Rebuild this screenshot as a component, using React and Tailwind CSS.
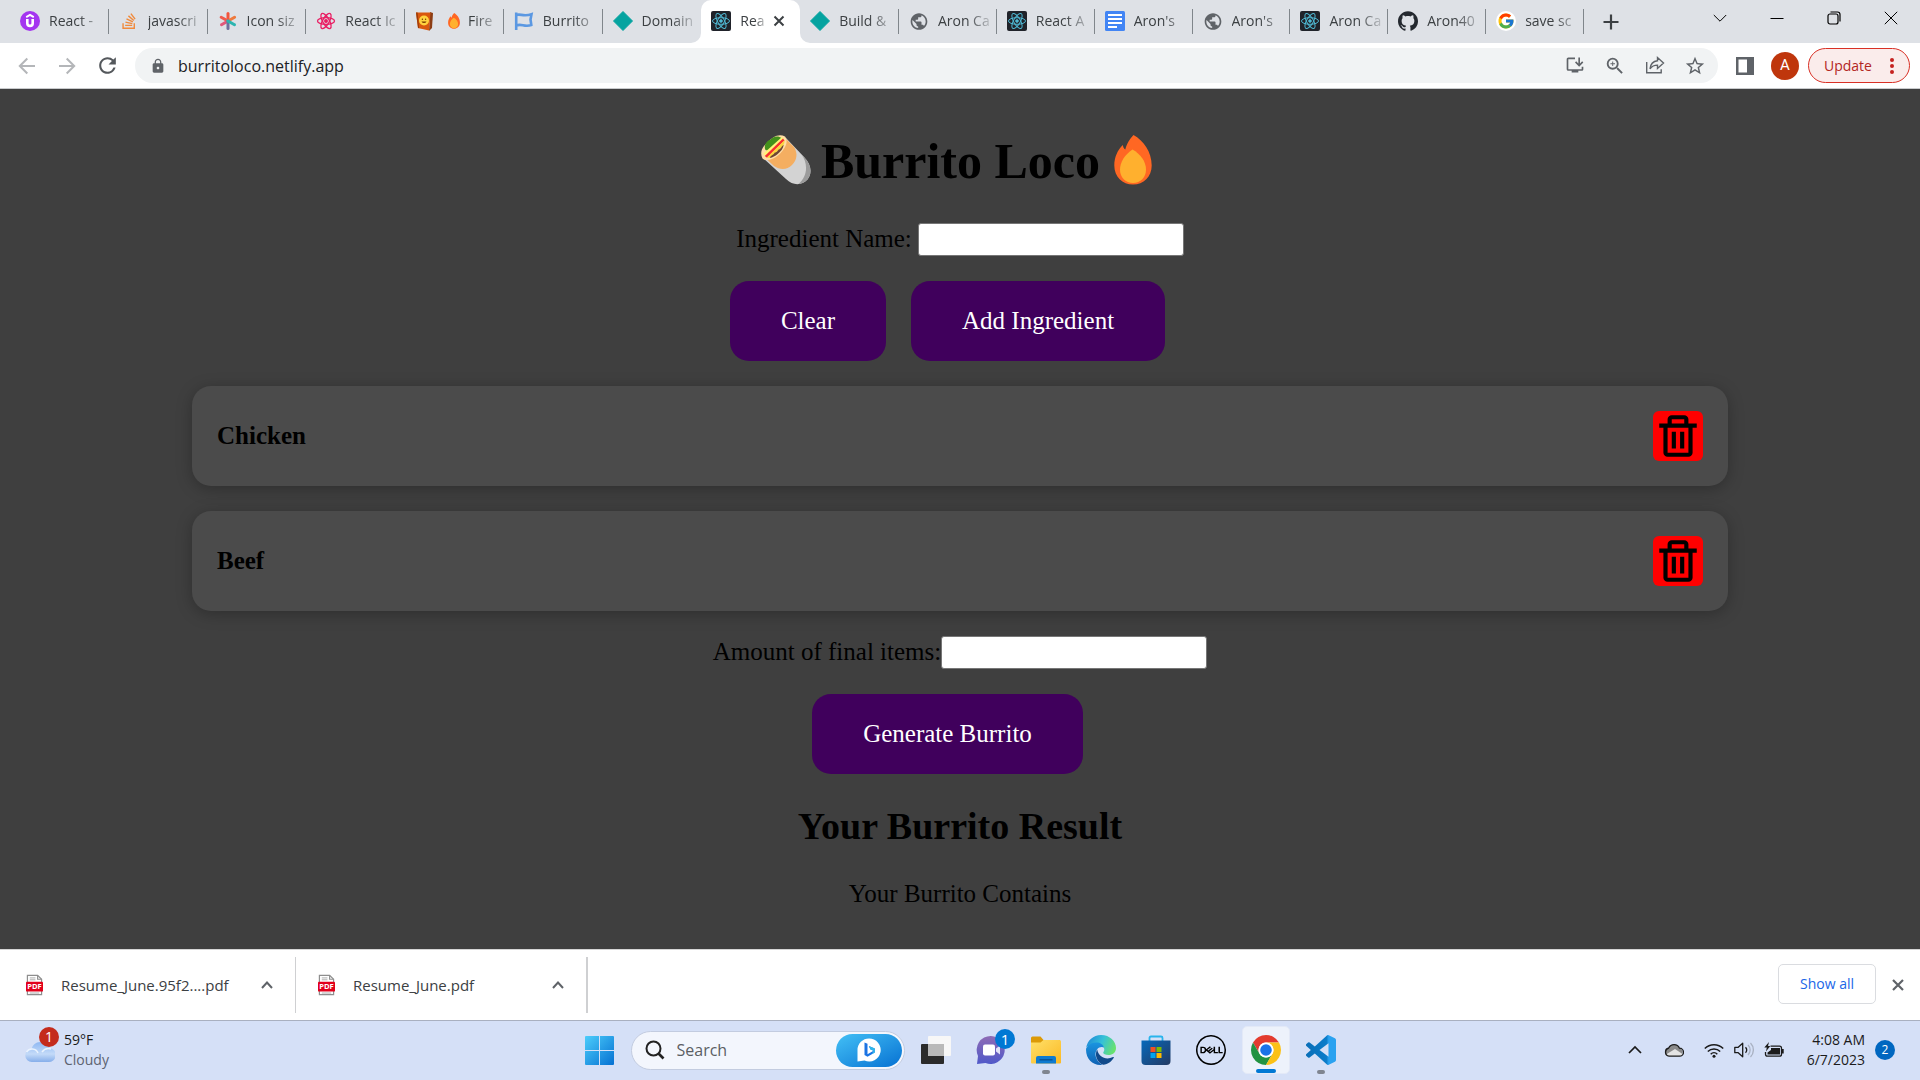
import React from "react";
import { FaStackOverflow } from "react-icons/fa";
import { FcGoogle } from "react-icons/fc";
import { SiDell, SiGithub } from "react-icons/si";
import { MdInstallDesktop, MdLock, MdPublic, MdRefresh, MdStarBorder, MdZoomIn } from "react-icons/md";
import { BiTrash } from "react-icons/bi";

/* ---------- tab icons ---------- */

const UdemyIcon = () => (
  <svg viewBox="0 0 20 20" className="size-5">
    <circle cx="10" cy="10" r="10" fill="#a435f0" />
    <path d="M6.2 6.1 10 3.9l3.8 2.2" fill="none" stroke="#fff" strokeWidth="1.8" />
    <path d="M7.3 8v4.2a2.7 2.7 0 0 0 5.4 0V8" fill="none" stroke="#fff" strokeWidth="2.6" />
  </svg>
);

const AsteriskIcon = () => (
  <svg viewBox="0 0 20 20" className="size-5" fill="none" strokeWidth="3" strokeLinecap="round">
    <path d="M10 10V2.5" stroke="#f2553c" />
    <path d="M10 10 3.2 6.2" stroke="#ef5a4c" />
    <path d="m10 10 6.600-3.700" stroke="#ee7a3e" />
    <path d="m10 10-6.500 3.800" stroke="#e0577a" />
    <path d="M10 10v7.500" stroke="#6f6f9d" />
    <path d="m10 10 6.500 3.800" stroke="#2cb5b0" />
  </svg>
);

const Atom = ({ color, width = 1 }) => (
  <g fill="none" stroke={color} strokeWidth={width}>
    <ellipse cx="10" cy="10" rx="8.500" ry="3.300" />
    <ellipse cx="10" cy="10" rx="8.500" ry="3.300" transform="rotate(60 10 10)" />
    <ellipse cx="10" cy="10" rx="8.500" ry="3.300" transform="rotate(120 10 10)" />
    <circle cx="10" cy="10" r="1.300" fill={color} />
  </g>
);

const ReactPinkIcon = () => (
  <svg viewBox="0 0 20 20" className="size-5">
    <Atom color="#e91e63" width={1.3} />
  </svg>
);

const ReactDarkIcon = () => (
  <svg viewBox="0 0 20 20" className="size-5">
    <rect width="20" height="20" rx="2" fill="#20232a" />
    <Atom color="#4fb8d3" />
  </svg>
);

const EmojiBookIcon = () => (
  <svg viewBox="0 0 20 20" className="size-5">
    <path d="m15 1 3 1-1 15-3 3z" fill="#8c3d14" />
    <path d="M1 1.500 15.500 1.500 14 19.500 3 17z" fill="#d9580f" />
    <path d="M1 1.500 3 17l1.200.3L2.600 1.500z" fill="#9c3c08" />
    <circle cx="9" cy="9.500" r="5" fill="#ffd23f" />
    <circle cx="7.400" cy="8.200" r=".7" fill="#7a3a00" />
    <circle cx="10.600" cy="8.200" r=".7" fill="#7a3a00" />
    <path d="M6.500 10.500a2.800 2.800 0 0 0 5 0z" fill="#7a3a00" />
  </svg>
);

const FlagIcon = () => (
  <svg viewBox="0 0 20 20" className="size-5" fill="none" stroke="#5b98e2" strokeWidth="2.600">
    <path d="M2.200 1.500v17.500M2.200 4.200C6 2 9 6.200 17.500 3.200l-1 5.300.8 5.500c-7 2.500-10-2-15.100.6" />
  </svg>
);

const DiamondIcon = () => (
  <svg viewBox="0 0 20 20" className="size-5">
    <path d="M10 .5 19.500 10 10 19.500.5 10z" fill="#05a3a0" stroke="#05a3a0" strokeLinejoin="round" />
  </svg>
);

const DocsIcon = () => (
  <svg viewBox="0 0 20 20" className="size-5">
    <rect width="20" height="20" rx="1.500" fill="#4285f4" />
    <path d="M3 4h14M3 8h14M3 12h14M3 16h9" stroke="#fff" strokeWidth="2" />
  </svg>
);

const FlameShape = ({ className }) => (
  <svg viewBox="0 0 38 50" className={className}>
    <path
      d="M19.500 0C16 3.500 12.500 9 11.300 14.500 9.800 13.500 9.200 12 8.800 10 3.500 15 .3 22.500.3 30.500.3 42 8.500 49.500 19 49.500S37.700 42 37.700 30.500C37.700 17 29.500 5.500 19.500 0z"
      fill="#ff6723"
    />
    <path
      d="M18.500 14.500C11 19.500 6 27 6 34.500 6 42.500 11.500 48 19 48s13-5.500 13-13.500c0-8-5.500-15.500-13.500-20z"
      fill="#ffb02e"
    />
  </svg>
);

const GoogleIcon = () => (
  <span className="flex size-5 items-center justify-center rounded-full bg-white">
    <FcGoogle size={18} />
  </span>
);

const TABS = [
  { title: "React -", icon: <UdemyIcon /> },
  { title: "javascri", icon: <FaStackOverflow size={18} color="#f08a3c" /> },
  { title: "Icon siz", icon: <AsteriskIcon /> },
  { title: "React Ic", icon: <ReactPinkIcon /> },
  { title: "Fire", icon: <EmojiBookIcon />, flame: true },
  { title: "Burrito", icon: <FlagIcon /> },
  { title: "Domain", icon: <DiamondIcon /> },
  { title: "Rea", icon: <ReactDarkIcon />, active: true },
  { title: "Build &", icon: <DiamondIcon /> },
  { title: "Aron Ca", icon: <MdPublic size={21} color="#5f6368" />, narrow: true },
  { title: "React A", icon: <ReactDarkIcon />, narrow: true },
  { title: "Aron's", icon: <DocsIcon />, narrow: true },
  { title: "Aron's", icon: <MdPublic size={21} color="#5f6368" />, narrow: true },
  { title: "Aron Ca", icon: <ReactDarkIcon />, narrow: true },
  { title: "Aron40", icon: <SiGithub size={20} color="#24292f" />, narrow: true },
  { title: "save sc", icon: <GoogleIcon />, narrow: true },
];

function Tab({ tab, separator }) {
  const base =
    "relative flex h-[43px] min-w-0 items-center pb-px pl-[10px] " + (tab.narrow ? "flex-[98]" : "flex-[99]");
  return (
    <div className={tab.active ? base + " rounded-t-[10px] bg-white" : base}>
      {tab.active && (
        <>
          <svg viewBox="0 0 10 10" className="absolute bottom-0 -left-[10px] size-[10px]">
            <path d="M10 0v10H0A10 10 0 0 0 10 0z" fill="#fff" />
          </svg>
          <svg viewBox="0 0 10 10" className="absolute -right-[10px] bottom-0 size-[10px]">
            <path d="M0 0v10h10A10 10 0 0 1 0 0z" fill="#fff" />
          </svg>
        </>
      )}
      <button type="button" className="flex min-w-0 flex-1 items-center gap-[9px]">
        <span className="flex w-5 shrink-0 justify-center">{tab.icon}</span>
        <span className="flex min-w-0 flex-1 items-center gap-2 text-[14px] leading-5 whitespace-nowrap text-[#3c4043] [mask-image:linear-gradient(to_right,black_50%,transparent)]">
          {tab.flame && <FlameShape className="ml-1 h-4 w-3 shrink-0" />}
          {tab.title}
        </span>
      </button>
      {tab.active && (
        <button type="button" aria-label="Close tab" className="mr-[14px] ml-1 shrink-0">
          <svg viewBox="0 0 12 12" className="size-3" stroke="#3c4043" strokeWidth="2">
            <path d="m1.500 1.500 9 9m0-9-9 9" />
          </svg>
        </button>
      )}
      <span className={separator ? "h-[25px] w-px shrink-0 bg-[#80868b]" : "w-px shrink-0"} />
    </div>
  );
}

function TabStrip() {
  return (
    <div className="flex h-[43px] items-center bg-[#dee1e6] pl-[10px]">
      <div className="flex min-w-0 flex-[0_1_1574px]">
        {TABS.map((tab, i) => (
          <Tab key={i} tab={tab} separator={!tab.active && !TABS[i + 1]?.active} />
        ))}
      </div>
      <button type="button" aria-label="New tab" className="ml-[19px] shrink-0">
        <svg viewBox="0 0 16 16" className="size-4" stroke="#3c4043" strokeWidth="2.200">
          <path d="M8 .5v15M.5 8h15" />
        </svg>
      </button>
      <div className="mr-px mb-[7px] ml-auto flex shrink-0 text-black">
        <button type="button" aria-label="Search tabs" className="flex w-[57px] justify-center">
          <svg viewBox="0 0 14 14" className="size-[14px]" fill="none" stroke="currentColor">
            <path d="m.8 4 6.200 6.200L13.200 4" />
          </svg>
        </button>
        <button type="button" aria-label="Minimize" className="flex w-[57px] justify-center">
          <svg viewBox="0 0 14 14" className="size-[14px]" stroke="currentColor">
            <path d="M.5 7.500h13" />
          </svg>
        </button>
        <button type="button" aria-label="Restore" className="flex w-[57px] justify-center">
          <svg viewBox="0 0 14 14" className="size-[14px]" fill="none" stroke="currentColor" strokeWidth="1.200">
            <rect x="1" y="3" width="10" height="10" rx="2" />
            <path d="M3.500 1H10.500Q13 1 13 3.500V10.500" />
          </svg>
        </button>
        <button type="button" aria-label="Close" className="flex w-[57px] justify-center">
          <svg viewBox="0 0 14 14" className="size-[14px]" stroke="currentColor">
            <path d="m.8.800 12.400 12.400m0-12.400L.8 13.200" />
          </svg>
        </button>
      </div>
    </div>
  );
}

function Toolbar() {
  return (
    <div className="flex h-[46px] items-center border-b border-[#c9cbcd] bg-white pr-[10px] pl-[7px]">
      <button type="button" aria-label="Back" className="flex w-10 justify-center">
        <svg viewBox="0 0 18 18" className="size-[18px]" fill="none" stroke="#b4b6b9" strokeWidth="2">
          <path d="M17 9H2M9.300 1.500 1.800 9l7.500 7.500" />
        </svg>
      </button>
      <button type="button" aria-label="Forward" className="flex w-10 justify-center">
        <svg viewBox="0 0 18 18" className="size-[18px]" fill="none" stroke="#b4b6b9" strokeWidth="2">
          <path d="M1 9h15M8.700 1.500 16.200 9l-7.500 7.500" />
        </svg>
      </button>
      <button type="button" aria-label="Reload" className="mr-[8px] flex w-10 justify-center">
        <MdRefresh size={25} color="#54585c" />
      </button>
      <div className="flex h-[35px] min-w-0 flex-1 items-center rounded-full bg-[#f1f3f4] pl-[15px]">
        <MdLock size={16} color="#5f6368" className="shrink-0" />
        <input
          type="text"
          aria-label="Address"
          defaultValue="burritoloco.netlify.app"
          className="ml-3 min-w-0 flex-1 bg-transparent text-[16px] text-[#202124] outline-none"
        />
        <div className="mr-[3px] flex text-[#5f6368]">
          <button type="button" aria-label="Install app" className="flex w-10 justify-center">
            <MdInstallDesktop size={20} />
          </button>
          <button type="button" aria-label="Zoom" className="flex w-10 justify-center">
            <MdZoomIn size={22} />
          </button>
          <button type="button" aria-label="Share" className="flex w-10 justify-center">
            <svg viewBox="0 0 20 20" className="size-5" fill="none" stroke="currentColor" strokeWidth="1.400">
              <path d="M1.700 7v10.800h14.500v-3.500" />
              <path d="M12.500 2.500v3.300C8 6.300 5.500 9.500 5 13.800c2-2.800 4.300-3.700 7.500-3.700v3.400L18.500 8z" />
            </svg>
          </button>
          <button type="button" aria-label="Bookmark" className="flex w-10 justify-center">
            <MdStarBorder size={22} />
          </button>
        </div>
      </div>
      <button type="button" aria-label="Side panel" className="ml-[18px]">
        <svg viewBox="0 0 18 18" className="size-[18px]">
          <path d="M0 0h18v18H0zM2.500 2.500v13h8.500v-13z" fill="#5f6368" fillRule="evenodd" />
        </svg>
      </button>
      <button
        type="button"
        aria-label="Profile"
        className="ml-[17px] flex size-7 items-center justify-center rounded-full bg-[#bf360c] font-['Roboto',sans-serif] text-[15px] text-white"
      >
        A
      </button>
      <button
        type="button"
        className="ml-[9px] flex h-[35px] w-[102px] items-center justify-between rounded-full border border-[#d93025] bg-[#faeceb] pr-[15px] pl-[15px] text-[14px] text-[#b3261e]"
      >
        Update
        <svg viewBox="0 0 4 16" className="h-4 w-1" fill="#c5221f">
          <circle cx="2" cy="2" r="2" />
          <circle cx="2" cy="8" r="2" />
          <circle cx="2" cy="14" r="2" />
        </svg>
      </button>
    </div>
  );
}

/* ---------- page ---------- */

const BurritoEmoji = () => (
  <svg viewBox="0 0 50 50" className="size-[50px]">
    <path d="M2 23 25 3l18 19c8 8 8 17 3.500 22.500C41 50.500 32 51 25 44z" fill="#d3d3d3" />
    <path d="m43 22-2.500-2.500C47 28 47 41 37.500 49c3.500-.5 6.500-2 9-4.500C51 39 51 30 43 22z" fill="#9b9b9b" />
    <path d="M1 20 22 1l11 11c4 6 3 13-2 18s-12 5-18 1z" fill="#f4ae61" />
    <path d="M1.500 23.500C-1.500 18 1 12 6 8c5-6 12-10 18-6.500 4 5 0 13-6.500 18.500-6 5-12.500 6.500-16 3.500z" fill="#ffdea7" />
    <path d="M4.500 15C2.500 11 5 6 9.500 4.500 13 .5 18 .8 20.500 3L8 16z" fill="#44911b" />
    <path d="M2.500 18.500 21 2l2 2L5 22z" fill="#fff478" />
    <path d="M3.800 21 22 3.600l1.500 1.800L6 22.800z" fill="#f92f2f" />
    <path d="M5.800 22.600 23.500 5.200c.4 2-.5 4-2 6.200L9 23z" fill="#fcd53f" />
    <path d="M9 23c.5-3 3.500-2.500 4.500-5.200 2.500-.3 3-2.300 4.200-3.300 2.300-.5 2.300-3 5-4.500-.5 3.500-3 6.500-6 9-2.500 2-5 3.600-7.700 4z" fill="#6d4534" />
  </svg>
);

const purpleButton =
  "mr-[25px] rounded-[19px] bg-[#40005c] px-[51px] py-[25px] text-[25px] leading-[30px] text-white";
const field = "h-[33px] w-[266px] rounded-[3px] border border-[#767676] bg-white px-1 text-[20px]";

function Ingredient({ name }) {
  return (
    <li className="flex items-center justify-between rounded-[19px] bg-[#4b4b4b] p-[25px] shadow-[0_3px_16px_rgba(0,0,0,0.26)]">
      <h3 className="text-[25px] leading-[30px] font-bold">{name}</h3>
      <button type="button" aria-label={"Delete " + name} className="rounded-[6px] bg-[#ff0000]">
        <BiTrash size={50} />
      </button>
    </li>
  );
}

function BurritoPage() {
  return (
    <main className="flex flex-1 flex-col items-center bg-[#3f3f3f] pt-[44px] pb-[40px] font-['Liberation_Serif',serif] text-[25px] leading-[29px] text-black">
      <h1 className="flex items-center text-[50px] leading-[57px] font-bold">
        <span className="-mt-1 mr-[10px]">
          <BurritoEmoji />
        </span>
        Burrito Loco
        <span className="-mt-1 mr-[7px] ml-[14px]">
          <FlameShape className="h-[50px] w-[38px]" />
        </span>
      </h1>
      <div className="mt-[33px] flex items-center">
        <label htmlFor="ingredient" className="mr-[6px] pb-[2px]">
          Ingredient Name:
        </label>
        <input id="ingredient" type="text" className={field} />
      </div>
      <div className="mt-[25px] flex">
        <button type="button" className={purpleButton}>
          Clear
        </button>
        <button type="button" className={purpleButton}>
          Add Ingredient
        </button>
      </div>
      <ul className="mt-[25px] flex w-4/5 flex-col gap-[25px]">
        <Ingredient name="Chicken" />
        <Ingredient name="Beef" />
      </ul>
      <div className="mt-[25px] flex items-center">
        <label htmlFor="amount" className="pb-[2px]">
          Amount of final items:
        </label>
        <input id="amount" type="text" className={field} />
      </div>
      <button type="button" className={purpleButton + " mt-[25px]"}>
        Generate Burrito
      </button>
      <h2 className="mt-[30px] text-[38px] leading-[44px] font-bold">Your Burrito Result</h2>
      <p className="mt-[31px]">Your Burrito Contains</p>
    </main>
  );
}

/* ---------- downloads ---------- */

const PdfIcon = () => (
  <svg viewBox="0 0 18 22" className="h-[22px] w-[17px]">
    <path d="M1.500.7h10.800l4.200 4.200v16.400h-15z" fill="#fff" stroke="#8e8e8e" strokeWidth="1.300" />
    <path d="M12.300.7v4.200h4.200" fill="none" stroke="#8e8e8e" strokeWidth="1.200" />
    <path d="M4 3.500h6M4 5.500h6M4 19.500h10" stroke="#a9a9a9" />
    <rect y="7.500" width="18" height="10.500" rx="1" fill="#e2001a" />
    <text x="9" y="15.700" textAnchor="middle" fontSize="8" fontWeight="700" fontFamily="Open Sans, sans-serif" fill="#fff">
      PDF
    </text>
  </svg>
);

function Download({ name, last }) {
  return (
    <div
      className={
        last
          ? "flex h-14 w-[292px] items-center border-r-2 border-[#cfd0d2] pl-[22px]"
          : "flex h-14 w-[296px] items-center border-r border-[#cfd0d2] pl-[26px]"
      }
    >
      <button type="button" className="flex flex-1 items-center gap-[18px] text-[15px] text-[#3c4043]">
        <PdfIcon />
        {name}
      </button>
      <button type="button" aria-label={"Options for " + name} className="mr-[22px]">
        <svg viewBox="0 0 12 12" className="size-3" fill="none" stroke="#5f6368" strokeWidth="2">
          <path d="m1 9 5-5.500L11 9" />
        </svg>
      </button>
    </div>
  );
}

function DownloadsBar() {
  return (
    <div className="flex h-[71px] items-center border-t border-[#d5d5d5] bg-white">
      <Download name="Resume_June.95f2....pdf" />
      <Download name="Resume_June.pdf" last />
      <button
        type="button"
        className="mb-[2px] ml-auto h-10 w-[98px] rounded-[5px] border border-[#dadce0] pb-px text-[14px] text-[#1a66e8]"
      >
        Show all
      </button>
      <button type="button" aria-label="Close downloads" className="mr-4 ml-4">
        <svg viewBox="0 0 12 12" className="size-3" stroke="#5f6368" strokeWidth="2.200">
          <path d="m1 1 10 10m0-10L1 11" />
        </svg>
      </button>
    </div>
  );
}

/* ---------- taskbar ---------- */

const WeatherIcon = () => (
  <svg viewBox="0 0 30 26" className="h-[26px] w-[30px]">
    <defs>
      <linearGradient id="cloud" x1="0" y1="0" x2="0" y2="1">
        <stop offset="0" stopColor="#8fb8f2" />
        <stop offset=".6" stopColor="#c3daf8" />
        <stop offset="1" stopColor="#86aeea" />
      </linearGradient>
    </defs>
    <path d="M7 25a6.500 6.500 0 0 1-.5-13A9.500 9.500 0 0 1 24.500 11 7 7 0 0 1 23 25z" fill="url(#cloud)" />
    <path d="M1.500 15a6.500 6.500 0 0 1 11.500 1M17 15a8 8 0 0 1 9-3" fill="none" stroke="#eaf3fe" strokeWidth="1.500" />
  </svg>
);

const StartIcon = () => (
  <svg viewBox="0 0 29 29" className="size-[29px]">
    <defs>
      <linearGradient id="win" x1="0" y1="0" x2="1" y2="1">
        <stop offset="0" stopColor="#4ccdfb" />
        <stop offset="1" stopColor="#0571d2" />
      </linearGradient>
    </defs>
    <path
      d="M1 0h13v14H0V1a1 1 0 0 1 1-1zm14 0h13a1 1 0 0 1 1 1v13H15zM0 15h14v14H1a1 1 0 0 1-1-1zm15 0h14v13a1 1 0 0 1-1 1H15z"
      fill="url(#win)"
    />
  </svg>
);

const BingIcon = () => (
  <svg viewBox="0 0 24 24" className="size-6">
    <path d="M12 .5a11.500 11.500 0 1 1-4.500 22L.5 23.500V12A11.500 11.500 0 0 1 12 .5z" fill="#fff" />
    <path d="m7.500 4.500 3 1.200v10.500l6-3.400-3-1.400-1.700-3.500 6 2.500v4.200l-7.300 4.200-3-1.800z" fill="#1b73e3" />
    <path d="m11.800 7.900 6 2.500v4.200l-3 1.700 1.700-3.500-3-1.400z" fill="#31b8ea" />
  </svg>
);

const TaskViewIcon = () => (
  <svg viewBox="0 0 30 28" className="h-7 w-[30px]">
    <rect y="8" width="23" height="20" rx="1" fill="#2b2b2b" />
    <rect x="7" width="23" height="20" rx="1" fill="#f7f7f7" />
    <path d="M7 8h16v12H8a1 1 0 0 1-1-1z" fill="#b9b9b9" />
  </svg>
);

const ChatIcon = () => (
  <svg viewBox="0 0 30 30" className="size-[30px]">
    <defs>
      <linearGradient id="chat" x1="0" y1="0" x2="0" y2="1">
        <stop offset="0" stopColor="#8e6bb5" />
        <stop offset="1" stopColor="#5059c9" />
      </linearGradient>
    </defs>
    <path d="M15 1a14 14 0 1 1-5.500 27L1 29l1-8A14 14 0 0 1 15 1z" fill="url(#chat)" />
    <rect x="7" y="9.500" width="12" height="11" rx="2" fill="#fff" />
    <path d="m20 13.500 4-3v9l-4-3z" fill="#e3e3f7" />
  </svg>
);

const ExplorerIcon = () => (
  <svg viewBox="0 0 30 28" className="h-7 w-[30px]">
    <defs>
      <linearGradient id="folder" x1="0" y1="0" x2="1" y2="1">
        <stop offset="0" stopColor="#ffe069" />
        <stop offset="1" stopColor="#fbb924" />
      </linearGradient>
    </defs>
    <path d="M0 2a1.500 1.500 0 0 1 1.500-1.500h8L12.500 4H29v6H0z" fill="#dc9a08" />
    <path d="M0 6.500h9.500L12.500 4h16A1.500 1.500 0 0 1 30 5.500v21a1 1 0 0 1-1 1H1a1 1 0 0 1-1-1z" fill="url(#folder)" />
    <path d="M5 27.500V22q0-2 2-2h16q2 0 2 2v5.500z" fill="#0f7bd0" />
    <path d="M8.500 23.800h13" stroke="#0b4f8f" strokeWidth="1.300" />
  </svg>
);

const EdgeIcon = () => (
  <svg viewBox="0 0 30 30" className="size-[30px]">
    <defs>
      <linearGradient id="edgeTop" x1="0" y1="0.300" x2="1" y2="0.600">
        <stop offset="0" stopColor="#1f8ad8" />
        <stop offset=".5" stopColor="#35c1d8" />
        <stop offset="1" stopColor="#6be36a" />
      </linearGradient>
      <linearGradient id="edgeLow" x1="0" y1="0" x2="0" y2="1">
        <stop offset="0" stopColor="#1a94e0" />
        <stop offset="1" stopColor="#0f62b4" />
      </linearGradient>
    </defs>
    <path
      d="M.2 13C1.200 5.500 7.300 0 15 0c9 0 15 6.500 15 13 0 4.500-3.400 7-7.500 7-3.300 0-5.300-1-5.300-2.200 0-.9 1.100-1.300 1.100-3.300 0-3-3-5.500-7-5.500C6.500 9 2 10.500.2 13z"
      fill="url(#edgeTop)"
    />
    <path d="M.1 13.500C2 10.500 5 7.500 10.500 7.500c3.500 0 6.800 2 7.500 5-1.300-.8-5-1-7 2-3.500 5-.5 12.500 5.500 15.400C7 31-.7 23.500.1 13.500z" fill="url(#edgeLow)" />
    <path d="M11.200 14.500c-3 5-.4 13 6 15.300 4.800-.5 8.500-3.300 10.600-7 .3-.6-.3-1-.8-.7C20 25.500 12.500 22 11.200 14.500z" fill="#114a8b" />
  </svg>
);

const StoreIcon = () => (
  <svg viewBox="0 0 30 30" className="size-[30px]">
    <defs>
      <linearGradient id="store" x1="0" y1="0" x2="1" y2="1">
        <stop offset="0" stopColor="#0669bb" />
        <stop offset="1" stopColor="#243a63" />
      </linearGradient>
    </defs>
    <path d="M8.500 7V3q0-1.500 1.500-1.500h10q1.500 0 1.500 1.500v4" fill="none" stroke="#29b4ec" strokeWidth="1.800" />
    <path d="M.5 5.500h29V26a4 4 0 0 1-4 4h-21a4 4 0 0 1-4-4z" fill="url(#store)" />
    <path d="M9.500 12h5v5h-5z" fill="#f25022" />
    <path d="M15.500 12h5v5h-5z" fill="#7fba00" />
    <path d="M9.500 18h5v5h-5z" fill="#00a4ef" />
    <path d="M15.500 18h5v5h-5z" fill="#ffb900" />
  </svg>
);

const ChromeIcon = () => (
  <svg viewBox="2 2 44 44" className="size-[30px]">
    <path d="M24 13H43.050A22 22 0 0 0 4.950 13L14.470 29.500A11 11 0 0 1 24 13z" fill="#e33b2e" />
    <path d="M4.950 13A22 22 0 0 0 24 46L33.530 29.500A11 11 0 0 1 14.470 29.500z" fill="#229342" />
    <path d="M24 46A22 22 0 0 0 43.050 13H24A11 11 0 0 1 33.530 29.500z" fill="#fbc116" />
    <circle cx="24" cy="24" r="11" fill="#fff" />
    <circle cx="24" cy="24" r="8.500" fill="#1a73e8" />
  </svg>
);

const CodeIcon = () => (
  <svg viewBox="0 0 24 24" className="size-[30px]">
    <defs>
      <linearGradient id="code" x1="0" y1="0" x2="1" y2="0">
        <stop offset="0" stopColor="#0a6fb8" />
        <stop offset=".68" stopColor="#0b7cc9" />
        <stop offset=".76" stopColor="#2aa2f0" />
      </linearGradient>
    </defs>
    <path
      d="M23.150 2.587L18.210.21a1.494 1.494 0 0 0-1.705.29l-9.460 8.630-4.120-3.128a.999.999 0 0 0-1.276.057L.327 7.261A1 1 0 0 0 .326 8.740L3.899 12 .326 15.260a1 1 0 0 0 .001 1.479L1.650 17.940a.999.999 0 0 0 1.276.057l4.120-3.128 9.460 8.630a1.492 1.492 0 0 0 1.704.29l4.942-2.377A1.500 1.500 0 0 0 24 20.060V3.939a1.500 1.500 0 0 0-.85-1.352zm-5.146 14.861L10.826 12l7.178-5.448v10.896z"
      fill="url(#code)"
    />
  </svg>
);

const APPS = [
  { label: "Task view", icon: <TaskViewIcon /> },
  { label: "Chat", icon: <ChatIcon />, badge: "1" },
  { label: "File Explorer", icon: <ExplorerIcon />, open: true },
  { label: "Edge", icon: <EdgeIcon /> },
  { label: "Store", icon: <StoreIcon /> },
  { label: "Dell", icon: <SiDell size={30} /> },
  { label: "Chrome", icon: <ChromeIcon />, active: true },
  { label: "Visual Studio Code", icon: <CodeIcon />, open: true },
];

function AppButton({ app }) {
  return (
    <div className="flex w-[55px] justify-center">
      <button
        type="button"
        aria-label={app.label}
        className={
          app.active
            ? "relative flex size-12 items-center justify-center rounded-[5px] border border-[#e3e9f7] bg-[#edf2fb]"
            : "relative flex size-12 items-center justify-center"
        }
      >
        {app.icon}
        {app.badge && (
          <span className="absolute top-[3px] right-0 flex size-5 items-center justify-center rounded-full bg-[#0078d4] text-[15px] leading-5 text-white">
            {app.badge}
          </span>
        )}
        {app.open && <span className="absolute bottom-0 h-1 w-2 rounded-full bg-[#7f8590]" />}
        {app.active && <span className="absolute bottom-0 h-1 w-5 rounded-full bg-[#0078d4]" />}
      </button>
    </div>
  );
}

function Taskbar() {
  return (
    <div className="grid h-[60px] grid-cols-[1fr_auto_1fr] items-center border-t border-[#a9b0c0] bg-[#d5e0f7] pb-px">
      <button type="button" className="flex items-center justify-self-start pl-[25px] text-left">
        <span className="relative">
          <WeatherIcon />
          <span className="absolute -top-[10px] left-[14px] flex size-5 items-center justify-center rounded-full bg-[#c42b1c] text-[14px] leading-5 text-white">
            1
          </span>
        </span>
        <span className="ml-[9px] flex flex-col text-[14px] leading-5 text-[#1b1b1b]">
          <span>59°F</span>
          <span className="text-[#5d6371]">Cloudy</span>
        </span>
      </button>
      <div className="flex items-center">
        <button type="button" aria-label="Start" className="flex w-[55px] justify-center">
          <StartIcon />
        </button>
        <div className="mx-1 flex h-[39px] w-[274px] items-center rounded-full border border-[#c3cce0] bg-[#f3f6fd] pr-[2px] pl-[13px]">
          <svg viewBox="0 0 20 20" className="size-5 shrink-0" fill="none" stroke="#222" strokeWidth="2">
            <circle cx="8.500" cy="8.500" r="7" />
            <path d="m13.500 13.500 5 5" strokeWidth="2.600" />
          </svg>
          <input
            type="text"
            aria-label="Search"
            placeholder="Search"
            className="ml-3 min-w-0 flex-1 bg-transparent text-[16px] outline-none placeholder:text-[#5b5e64]"
          />
          <button
            type="button"
            aria-label="Bing"
            className="flex h-[33px] w-[66px] items-center justify-center rounded-full bg-linear-to-br from-[#43c0f5] to-[#0571d2]"
          >
            <BingIcon />
          </button>
        </div>
        {APPS.map((app) => (
          <AppButton key={app.label} app={app} />
        ))}
      </div>
      <div className="flex items-center justify-self-end pr-[25px] text-[#1b1b1b]">
        <button type="button" aria-label="Hidden icons" className="mr-[22px]">
          <svg viewBox="0 0 14 14" className="size-[14px]" fill="none" stroke="currentColor" strokeWidth="1.700">
            <path d="m1 10 6-6 6 6" />
          </svg>
        </button>
        <svg viewBox="0 0 20 14" className="mr-5 h-[14px] w-5">
          <path d="M5 13a4 4 0 0 1-.3-8A6 6 0 0 1 15.500 5.200 4 4 0 0 1 15.500 13z" fill="#8b8b8b" />
          <path d="m2 11.500 9-5.500 7.500 5q-1 2-3 2H5q-2 0-3-1.500z" fill="#e4e4e4" />
          <path d="M5 13.200a4.200 4.200 0 0 1-.3-8.200A6 6 0 0 1 15.500 5.200 4 4 0 0 1 15.500 13.200z" fill="none" stroke="#1b1b1b" strokeWidth="1.300" />
        </svg>
        <svg viewBox="0 0 20 15" className="mr-[10px] h-[15px] w-5" fill="none" stroke="currentColor" strokeWidth="1.500">
          <path d="M.8 5.500a13 13 0 0 1 18.400 0M3.800 8.500a8.800 8.800 0 0 1 12.400 0M6.700 11.200a4.700 4.700 0 0 1 6.600 0" />
          <circle cx="10" cy="13.300" r="1.500" fill="currentColor" stroke="none" />
        </svg>
        <svg viewBox="0 0 20 16" className="mr-[10px] h-4 w-5" fill="none" stroke="currentColor" strokeWidth="1.300">
          <path d="M.8 5.300h3.400L8.700 1.200v13.600l-4.500-4.100H.8z" strokeLinejoin="round" />
          <path d="M11.500 5.300a4 4 0 0 1 0 5.400" />
          <path d="M14 3a7 7 0 0 1 0 10M16.500 1a10 10 0 0 1 0 14" stroke="#a9b1c2" />
        </svg>
        <svg viewBox="0 0 20 16" className="mr-[23px] h-4 w-5" fill="none" stroke="currentColor" strokeWidth="1.300">
          <path d="M6.500 4.200h9q2 0 2 2v6q0 2-2 2h-12q-2 0-2-2V10" />
          <path d="M7 6h9v6.500H3.500V10.500L7 8z" fill="currentColor" stroke="none" />
          <path d="M18.800 7v4.500" strokeWidth="1.800" />
          <path d="M5 0 .3 5.500h2.500L2 9.500 6.300 4H4z" fill="currentColor" stroke="none" />
        </svg>
        <div className="pb-px text-right text-[14px] leading-5">
          <div>4:08 AM</div>
          <div>6/7/2023</div>
        </div>
        <button
          type="button"
          aria-label="2 notifications"
          className="ml-[10px] flex size-5 items-center justify-center rounded-full bg-[#0067c0] text-[12px] text-white"
        >
          2
        </button>
      </div>
    </div>
  );
}

export default function App() {
  return (
    <div className="flex min-h-screen flex-col font-['Open_Sans','Noto_Sans',sans-serif]">
      <TabStrip />
      <Toolbar />
      <BurritoPage />
      <DownloadsBar />
      <Taskbar />
    </div>
  );
}
